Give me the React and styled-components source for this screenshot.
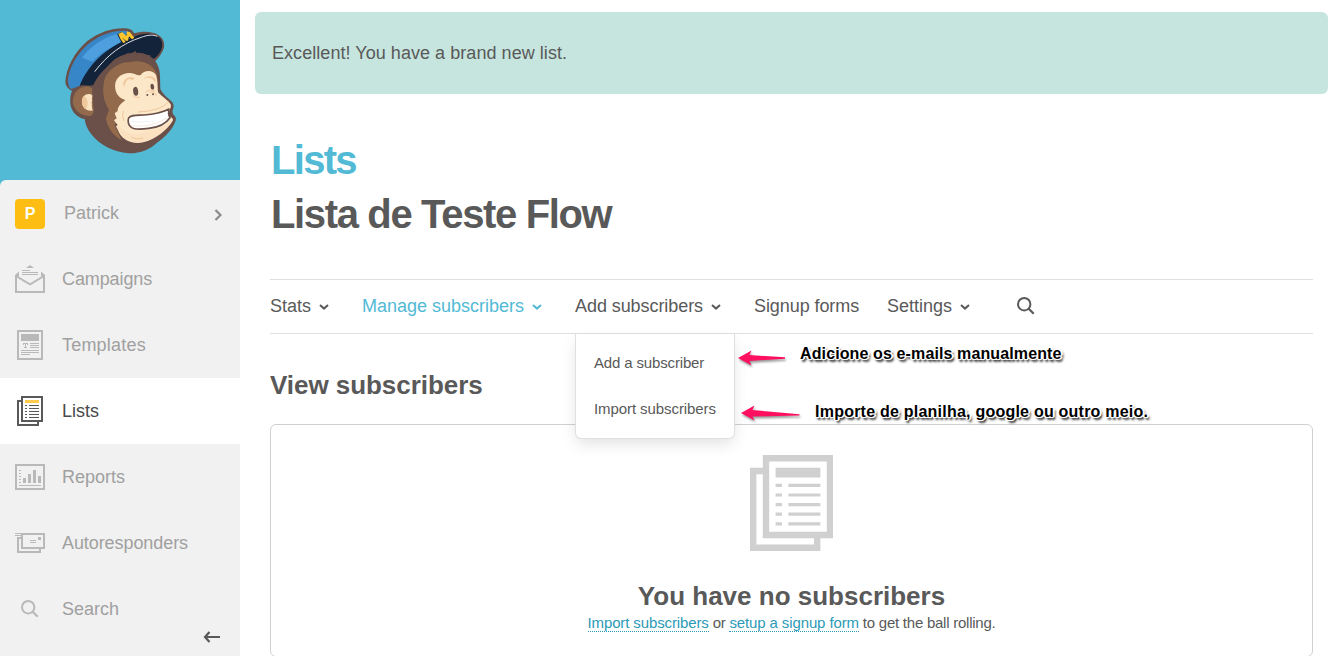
import React from "react";
import styled, { createGlobalStyle, ThemeProvider } from "styled-components";

const theme = {
  colors: {
    blue: "#52bad5",
    link: "#2c9ab7",
    dark: "#595959",
    gray_1: "#a0a0a0",
    gray_2: "#b9b9b9",
    gray_3: "#d0d0d0",
    gray_4: "#e0e0e0",
    gray_5: "#f1f1f1",
    mint: "#c6e5de",
    yellow: "#fdbd12",
    pink: "#ff0f5f",
  },
};

const Monkey = () => (
  <MonkeySvg viewBox="0 0 420 450">
    {/* outline */}
    <path
      d="M46 202 C48 160 72 112 112 78 C150 50 190 38 226 40 C240 41 250 47 252 55 C275 48 310 48 328 62 C344 74 346 92 338 108 C332 121 324 131 316 138 C324 150 330 165 330 184 L331 222 C338 238 358 252 367 262 C373 270 371 279 368 286 C366 291 368 298 374 303 C380 309 378 318 373 326 C366 344 344 366 320 384 C300 403 270 416 236 415 C190 411 148 390 124 358 C112 342 106 328 104 312 C82 308 64 291 61 266 C60 252 61 238 66 228 C54 222 47 214 46 202 Z"
      fill="#6a5049"
    />
    {/* head and ear */}
    <path
      d="M68 262 C68 234 86 214 114 214 L130 222 L132 302 C100 308 74 292 68 262 Z"
      fill="#936a4b"
    />
    <path
      d="M130 242 C112 230 96 242 96 262 C97 280 112 291 130 286 C124 282 128 277 125 273 C128 268 122 261 127 257 C124 250 126 246 130 242 Z"
      fill="#fae2c0"
    />
    <path
      d="M100 244 C109 245 115 258 112 272 C110 280 108 283 104 281 C94 270 93 254 100 244 Z"
      fill="#efc79c"
    />
    <path
      d="M164 190 C178 162 210 140 236 142 C284 130 318 154 322 186 L324 228 C318 254 280 258 240 270 L194 330 L216 378 C194 364 172 340 168 314 C168 299 176 292 176 284 C160 260 154 228 164 190 Z"
      fill="#936a4b"
    />
    <path
      d="M196 222 C191 194 210 174 240 174 C258 176 262 183 272 180 C282 165 308 164 318 180 C324 200 322 216 324 232 C338 246 356 258 362 268 C366 278 354 290 356 302 C360 306 370 308 369 316 C354 344 316 374 280 382 C246 390 214 374 204 346 L198 334 L203 330 L192 316 L200 310 L194 295 L203 288 C202 274 216 264 226 255 C208 250 199 238 196 222 Z"
      fill="#fde7c9"
    />
    <path
      d="M218 218 C218 190 238 182 254 190 L247 195 L238 192 C228 195 224 206 224 218 L220 207 Z"
      fill="#efc79c"
    />
    <path
      d="M278 198 C284 182 306 178 317 193 L317 204 C308 187 292 184 280 194 Z"
      fill="#efc79c"
    />
    {/* cap */}
    <path
      d="M54 194 C58 152 90 104 124 80 C160 54 196 46 226 47 C240 48 246 56 245 65 L248 73 C190 88 140 124 89 212 L63 223 C56 216 54 206 54 194 Z"
      fill="#3787c8"
    />
    <path
      d="M96 128 C124 92 160 68 200 57 L216 84 C180 96 150 114 128 140 L96 128 Z"
      fill="#4da0dd"
    />
    <path
      d="M89 212 C116 144 180 88 252 66 C280 50 320 54 332 72 C344 91 332 119 310 132 C286 106 222 106 186 140 C162 164 140 188 130 210 C118 214 104 208 89 212 Z"
      fill="#13233a"
    />
    <path
      d="M134 170 C170 122 218 84 274 67 C292 60 308 58 322 64"
      fill="none"
      stroke="#fff"
      strokeWidth="2.6"
    />
    <path
      d="M126 230 C132 198 152 170 176 154 L206 128 L204 138 L236 112 L233 122 L257 107 L258 117 L280 114 L280 121 L302 121 L298 127 L310 131 L304 134 L316 143 L305 142 L319 160 C292 130 246 140 236 139 C202 138 172 162 164 190 C154 226 160 258 176 284 C174 296 168 299 168 314 C174 344 192 368 222 378 C250 394 292 388 320 374 C294 402 272 409 236 408 C186 402 150 384 130 354 C118 338 112 320 111 306 C125 306 134 294 131 278 Z"
      fill="#6a5049"
    />
    {/* badge */}
    <path
      d="M202 58 L214 51 L226 63 L234 49 L242 55 L254 70 L244 76 L238 68 L234 79 L224 76 L218 74 L228 84 L219 89 L212 79 Z"
      fill="#18263b"
    />
    <path
      d="M205 57 L216 51 L229 63 L231 49 L240 52 L253 68 L246 73 L237 64 L234 77 L227 77 L216 67 L227 81 L220 84 L211 71 Z"
      fill="#ffc62e"
    />
    {/* face */}
    <ellipse cx="257" cy="229" rx="7.5" ry="13.5" fill="#6a5049" transform="rotate(-8 257 229)" />
    <ellipse cx="307" cy="215" rx="5.5" ry="9" fill="#6a5049" transform="rotate(-8 307 215)" />
    <path d="M248 242 Q257 252 269 246 M301 231 Q309 233 315 226" fill="none" stroke="#efc79c" strokeWidth="3" />
    <path d="M287 231 Q299 221 313 226 M311 233 Q320 235 318 242" fill="none" stroke="#efc79c" strokeWidth="3" />
    <circle cx="292" cy="240" r="3" fill="#6a5049" />
    <circle cx="309" cy="238" r="3" fill="#6a5049" />
    <path
      d="M207 327 C216 351 250 365 282 352 C310 346 342 342 366 315 C352 346 310 374 274 382 C238 388 204 362 203 333 Z"
      fill="#f7d6ad"
      opacity=".35"
    />
    <path
      d="M220 288 Q215 301 222 318 M264 291 Q330 289 357 260 M244 366 Q258 375 280 370"
      fill="none"
      stroke="#efc79c"
      strokeWidth="3"
    />
    <path
      d="M236 309 C243 298 260 301 282 300 C316 298 340 291 357 282 C355 291 356 302 360 308 C347 327 325 337 296 340 C276 343 254 345 244 337 C235 331 232 318 236 309 Z"
      fill="#fff"
      stroke="#6a5049"
      strokeWidth="5"
      strokeLinejoin="round"
    />
    <path d="M245 319 Q270 324 287 319 Q305 322 317 317" fill="none" stroke="#e8ecef" strokeWidth="2" />
    <path d="M247 332 Q300 340 352 309" fill="none" stroke="#f1ddcb" strokeWidth="2" />
  </MonkeySvg>
);

const CampaignIcon = () => (
  <Icon width="30" height="30" viewBox="0 0 30 30">
    <path
      d="M1 12V28H29V12M1 12L15 20.3L29 12"
      fill="none"
      stroke="currentColor"
      strokeWidth="2"
    />
    <path d="M0 12.2V11L4 7.5V12.5ZM30 12.2V11L26 7.5V12.5Z" />
    <path d="M11 4L15 1L19 4Z" />
    <path d="M7 6h8v1H7zM7 8h16v1H7zM7 10h16v1H7z" />
  </Icon>
);

const TemplateIcon = () => (
  <Icon width="26" height="30" viewBox="0 0 26 30" shapeRendering="crispEdges">
    <path d="M1 1H25V29H1Z" fill="none" stroke="currentColor" strokeWidth="2" />
    <path d="M4 4h18v7H4zM13 13h9v1h-9zM13 15h9v1h-9zM13 17h9v1h-9z" />
    <path d="M4 20h18v1H4zM4 22h18v1H4zM4 24h9v1H4z" />
    <path d="M6 13h5v2h-1v-1H9v3h1v1H7v-1h1v-3H7v1H6z" />
  </Icon>
);

const ListIcon = ({ width = 26, height = 30, header = "currentColor", crisp }) => (
  <Icon
    width={width}
    height={height}
    viewBox="0 0 26 30"
    shapeRendering={crisp ? "crispEdges" : "auto"}
  >
    <path
      d="M5 1H25V25H5ZM5 5H1V29H21V25"
      fill="none"
      stroke="currentColor"
      strokeWidth="2"
    />
    <path d="M8 4h14v3H8z" fill={header} />
    {[9, 12, 15, 18, 21].map((y) => (
      <path key={y} d={`M8 ${y}h2v1H8zM12 ${y}h10v1H12z`} />
    ))}
  </Icon>
);

const ReportIcon = () => (
  <Icon width="30" height="26" viewBox="0 0 30 26" shapeRendering="crispEdges">
    <path d="M1 1H29V25H1Z" fill="none" stroke="currentColor" strokeWidth="2" />
    <path d="M4 6h2v1H4zM4 9h2v1H4zM4 12h2v1H4zM4 15h2v1H4zM4 18h2v1H4z" />
    <path d="M8 14h3v5H8zM13 10h3v9h-3zM18 6h3v13h-3zM23 12h3v7h-3zM4 21h22v1H4z" />
  </Icon>
);

const AutoIcon = () => (
  <Icon width="30" height="20" viewBox="0 0 30 20" shapeRendering="crispEdges">
    <path
      d="M7 1H29V15H7ZM7 5H3V19H25V15"
      fill="none"
      stroke="currentColor"
      strokeWidth="2"
    />
    <path d="M0 0h6v1H0zM0 2h6v1H0zM15 7h6v1h-6zM15 9h6v1h-6zM23 4h3v3h-3z" />
  </Icon>
);

const SearchIcon = () => (
  <Icon width="18" height="18" viewBox="0 0 18 18">
    <circle cx="7.2" cy="7.2" r="6.2" fill="none" stroke="currentColor" strokeWidth="2" />
    <path d="M11.5 11.5L16.7 16.7" stroke="currentColor" strokeWidth="2.2" />
  </Icon>
);

const Caret = () => (
  <CaretSvg width="10" height="6" viewBox="0 0 10 6">
    <path d="M1 1L5 4.6L9 1" fill="none" stroke="currentColor" strokeWidth="2" />
  </CaretSvg>
);

const menuItems = [
  { id: 1, text: "Campaigns", icon: <CampaignIcon />, spacing: "-0.1px" },
  { id: 2, text: "Templates", icon: <TemplateIcon />, spacing: "0.2px" },
  { id: 3, text: "Lists", icon: <ListIcon crisp header="#fecb4d" />, active: true },
  { id: 4, text: "Reports", icon: <ReportIcon /> },
  { id: 5, text: "Autoresponders", icon: <AutoIcon />, spacing: "-0.08px" },
  { id: 6, text: "Search", icon: <SearchIcon /> },
];

const tabs = [
  { id: 1, text: "Stats", caret: true },
  { id: 2, text: "Manage subscribers", caret: true, active: true },
  { id: 3, text: "Add subscribers", caret: true, menu: true, spacing: "-0.07px" },
  { id: 4, text: "Signup forms", spacing: "-0.08px" },
  { id: 5, text: "Settings", caret: true },
];

const Sidebar = () => (
  <Side>
    <LogoBox>
      <Monkey />
    </LogoBox>
    <Menu>
      <MenuItem>
        <IconBox>
          <Avatar>P</Avatar>
        </IconBox>
        <UserName>Patrick</UserName>
        <UserArrow width="8" height="12" viewBox="0 0 8 12">
          <path d="M1.500 1L6.500 6L1.500 11" fill="none" stroke="currentColor" strokeWidth="2.2" />
        </UserArrow>
      </MenuItem>
      {menuItems.map((item) => (
        <MenuItem key={item.id} $active={item.active}>
          <IconBox>{item.icon}</IconBox>
          <MenuText $spacing={item.spacing}>{item.text}</MenuText>
        </MenuItem>
      ))}
      <Collapse width="17" height="12" viewBox="0 0 17 12">
        <path d="M6.500 1L2 6L6.500 11M2 6H17" fill="none" stroke="currentColor" strokeWidth="2.2" />
      </Collapse>
    </Menu>
  </Side>
);

const App = () => {
  return (
    <ThemeProvider theme={theme}>
      <GlobalStyle />
      <Page>
        <Sidebar />
        <Main>
          <Notice>Excellent! You have a brand new list.</Notice>
          <Content>
            <Title $blue $spacing="-1.7px">
              Lists
            </Title>
            <Title $spacing="-1.35px">Lista de Teste Flow</Title>
            <TabBar>
              {tabs.map((tab) => (
                <Tab key={tab.id} $active={tab.active}>
                  <TabText $spacing={tab.spacing}>{tab.text}</TabText>
                  {tab.caret && <Caret />}
                  {tab.menu && (
                    <DropMenu>
                      <DropItem $spacing="-0.15px">Add a subscriber</DropItem>
                      <DropItem $spacing="-0.08px">Import subscribers</DropItem>
                    </DropMenu>
                  )}
                </Tab>
              ))}
              <TabSearch>
                <SearchIcon />
              </TabSearch>
            </TabBar>
            <SubTitle>View subscribers</SubTitle>
            <Panel>
              <PanelIcon>
                <ListIcon width={83.2} height={96} />
              </PanelIcon>
              <PanelTitle>You have no subscribers</PanelTitle>
              <PanelText>
                <Link>Import subscribers</Link> or <Link>setup a signup form</Link> to get the
                ball rolling.
              </PanelText>
            </Panel>
          </Content>
        </Main>
        <Arrow $top={348} $left={736} width="54" height="22" viewBox="0 0 54 22">
          <path d="M2 10L15.500 2.500L13.500 7L49 9.300V10.700L13.500 13L15.500 17.500Z" />
        </Arrow>
        <Note $top={345} $left={800} $spacing="0.12px">
          Adicione os e-mails manualmente
        </Note>
        <Arrow $top={403} $left={739} width="66" height="22" viewBox="0 0 66 22">
          <path d="M2 10L15.500 2.500L13.500 7L60.500 11.200V12.500L13.500 13.500L15.500 17.500Z" />
        </Arrow>
        <Note $top={403} $left={815} $spacing="0.23px">
          Importe de planilha, google ou outro meio.
        </Note>
      </Page>
    </ThemeProvider>
  );
};

export default App;

const GlobalStyle = createGlobalStyle`
  * {
    box-sizing: border-box;
  }
  body {
    margin: 0;
    font-family: "Liberation Sans", Arial, sans-serif;
    color: ${theme.colors.dark};
    background-color: #fff;
  }
`;

const Page = styled.div`
  position: relative;
  display: flex;
  width: 1338px;
  height: 656px;
  overflow: hidden;
`;

const Side = styled.aside`
  width: 240px;
  display: flex;
  flex-direction: column;
  flex-shrink: 0;
  background-color: ${({ theme }) => theme.colors.blue};
`;

const LogoBox = styled.div`
  height: 180px;
  padding: 15px 0 0 50px;
`;

const MonkeySvg = styled.svg`
  display: block;
  width: 140px;
  height: 150px;
`;

const Menu = styled.nav`
  position: relative;
  flex: 1;
  background-color: ${({ theme }) => theme.colors.gray_5};
  border-radius: 6px 0 0 0;
`;

const MenuItem = styled.div`
  height: 66px;
  display: flex;
  align-items: center;
  color: ${({ theme, $active }) => ($active ? theme.colors.dark : theme.colors.gray_2)};
  background-color: ${({ $active }) => ($active ? "white" : "transparent")};

  span {
    color: ${({ theme, $active }) => ($active ? "#4a4a4a" : theme.colors.gray_1)};
  }
`;

const IconBox = styled.div`
  width: 30px;
  margin-left: 15px;
  display: flex;
  justify-content: center;
`;

const Icon = styled.svg`
  display: block;
  fill: currentColor;
`;

const Avatar = styled.div`
  width: 30px;
  height: 30px;
  margin-top: 2px;
  border-radius: 4px;
  background-color: ${({ theme }) => theme.colors.yellow};
  color: white;
  font-size: 16px;
  font-weight: 700;
  line-height: 30px;
  text-align: center;
`;

const MenuText = styled.span`
  margin-left: 17px;
  font-size: 18px;
  letter-spacing: ${({ $spacing }) => $spacing || "normal"};
`;

const UserName = styled(MenuText)`
  margin-left: 19px;
`;

const UserArrow = styled.svg`
  margin: 4px 18px 0 auto;
  color: #8c8c8c;
`;

const Collapse = styled.svg`
  position: absolute;
  right: 20px;
  bottom: 13px;
  color: ${({ theme }) => theme.colors.dark};
`;

const Main = styled.main`
  flex: 1;
  padding: 12px 10px 0 15px;
`;

const Notice = styled.div`
  height: 82px;
  padding-left: 17px;
  border-radius: 6px;
  background-color: ${({ theme }) => theme.colors.mint};
  font-size: 18px;
  line-height: 82px;
  letter-spacing: 0.05px;
`;

const Content = styled.div`
  padding: 39px 15px 0;
`;

const Title = styled.h1`
  margin: 0 0 0 1px;
  font-size: 40px;
  line-height: 54px;
  letter-spacing: ${({ $spacing }) => $spacing};
  color: ${({ theme, $blue }) => ($blue ? theme.colors.blue : theme.colors.dark)};
`;

const TabBar = styled.div`
  display: grid;
  grid-template-columns: 92px 213px 179px 133px 130px 18px;
  align-items: center;
  height: 55px;
  margin-top: 38px;
  border-top: 1px solid ${({ theme }) => theme.colors.gray_4};
  border-bottom: 1px solid ${({ theme }) => theme.colors.gray_4};
`;

const Tab = styled.div`
  position: relative;
  display: flex;
  align-items: center;
  gap: 8px;
  height: 53px;
  font-size: 18px;
  white-space: nowrap;
  color: ${({ theme, $active }) => ($active ? theme.colors.blue : theme.colors.dark)};
`;

const TabText = styled.span`
  letter-spacing: ${({ $spacing }) => $spacing || "normal"};
`;

const CaretSvg = styled.svg`
  margin-top: 1px;
`;

const TabSearch = styled.div`
  margin-top: -2px;
  color: ${({ theme }) => theme.colors.dark};
`;

const DropMenu = styled.div`
  position: absolute;
  top: 54px;
  left: 0;
  width: 160px;
  height: 105px;
  padding: 6px 0 0 18px;
  background-color: white;
  border: 1px solid ${({ theme }) => theme.colors.gray_4};
  border-top: none;
  border-radius: 0 0 6px 6px;
  box-shadow: 0 6px 16px -2px rgba(0, 0, 0, 0.13);
  z-index: 1;
`;

const DropItem = styled.div`
  font-size: 15px;
  line-height: 46px;
  letter-spacing: ${({ $spacing }) => $spacing};
`;

const SubTitle = styled.h2`
  margin: 36px 0 24px;
  font-size: 26px;
  line-height: 30px;
  letter-spacing: -0.05px;
`;

const Panel = styled.section`
  height: 233px;
  border: 1px solid ${({ theme }) => theme.colors.gray_3};
  border-radius: 6px;
  text-align: center;
`;

const PanelIcon = styled.div`
  display: flex;
  justify-content: center;
  margin-top: 30px;
  color: ${({ theme }) => theme.colors.gray_3};
`;

const PanelTitle = styled.h2`
  margin: 30px 0 0;
  font-size: 26px;
  line-height: 30px;
`;

const PanelText = styled.p`
  margin: 0;
  font-size: 15px;
  line-height: 24px;
  letter-spacing: -0.24px;
`;

const Link = styled.a`
  color: ${({ theme }) => theme.colors.link};
  border-bottom: 1px dotted ${({ theme }) => theme.colors.link};
  letter-spacing: -0.12px;
`;

const Arrow = styled.svg`
  position: absolute;
  top: ${({ $top }) => $top}px;
  left: ${({ $left }) => $left}px;
  fill: ${({ theme }) => theme.colors.pink};
  filter: drop-shadow(1px 2px 1px rgba(0, 0, 0, 0.4));
  z-index: 2;
`;

const Note = styled.div`
  position: absolute;
  top: ${({ $top }) => $top}px;
  left: ${({ $left }) => $left}px;
  font-size: 16px;
  font-weight: 700;
  line-height: 18px;
  letter-spacing: ${({ $spacing }) => $spacing};
  color: black;
  white-space: nowrap;
  text-shadow: -1px -1px 0 white, 1px -1px 0 white, -1px 1px 0 white,
    1px 1px 0 white, 2px 0 0 white, -2px 0 0 white, 2px 2px 3px rgba(0, 0, 0, 0.9),
    2px 3px 2px rgba(0, 0, 0, 0.5);
  z-index: 2;
`;
